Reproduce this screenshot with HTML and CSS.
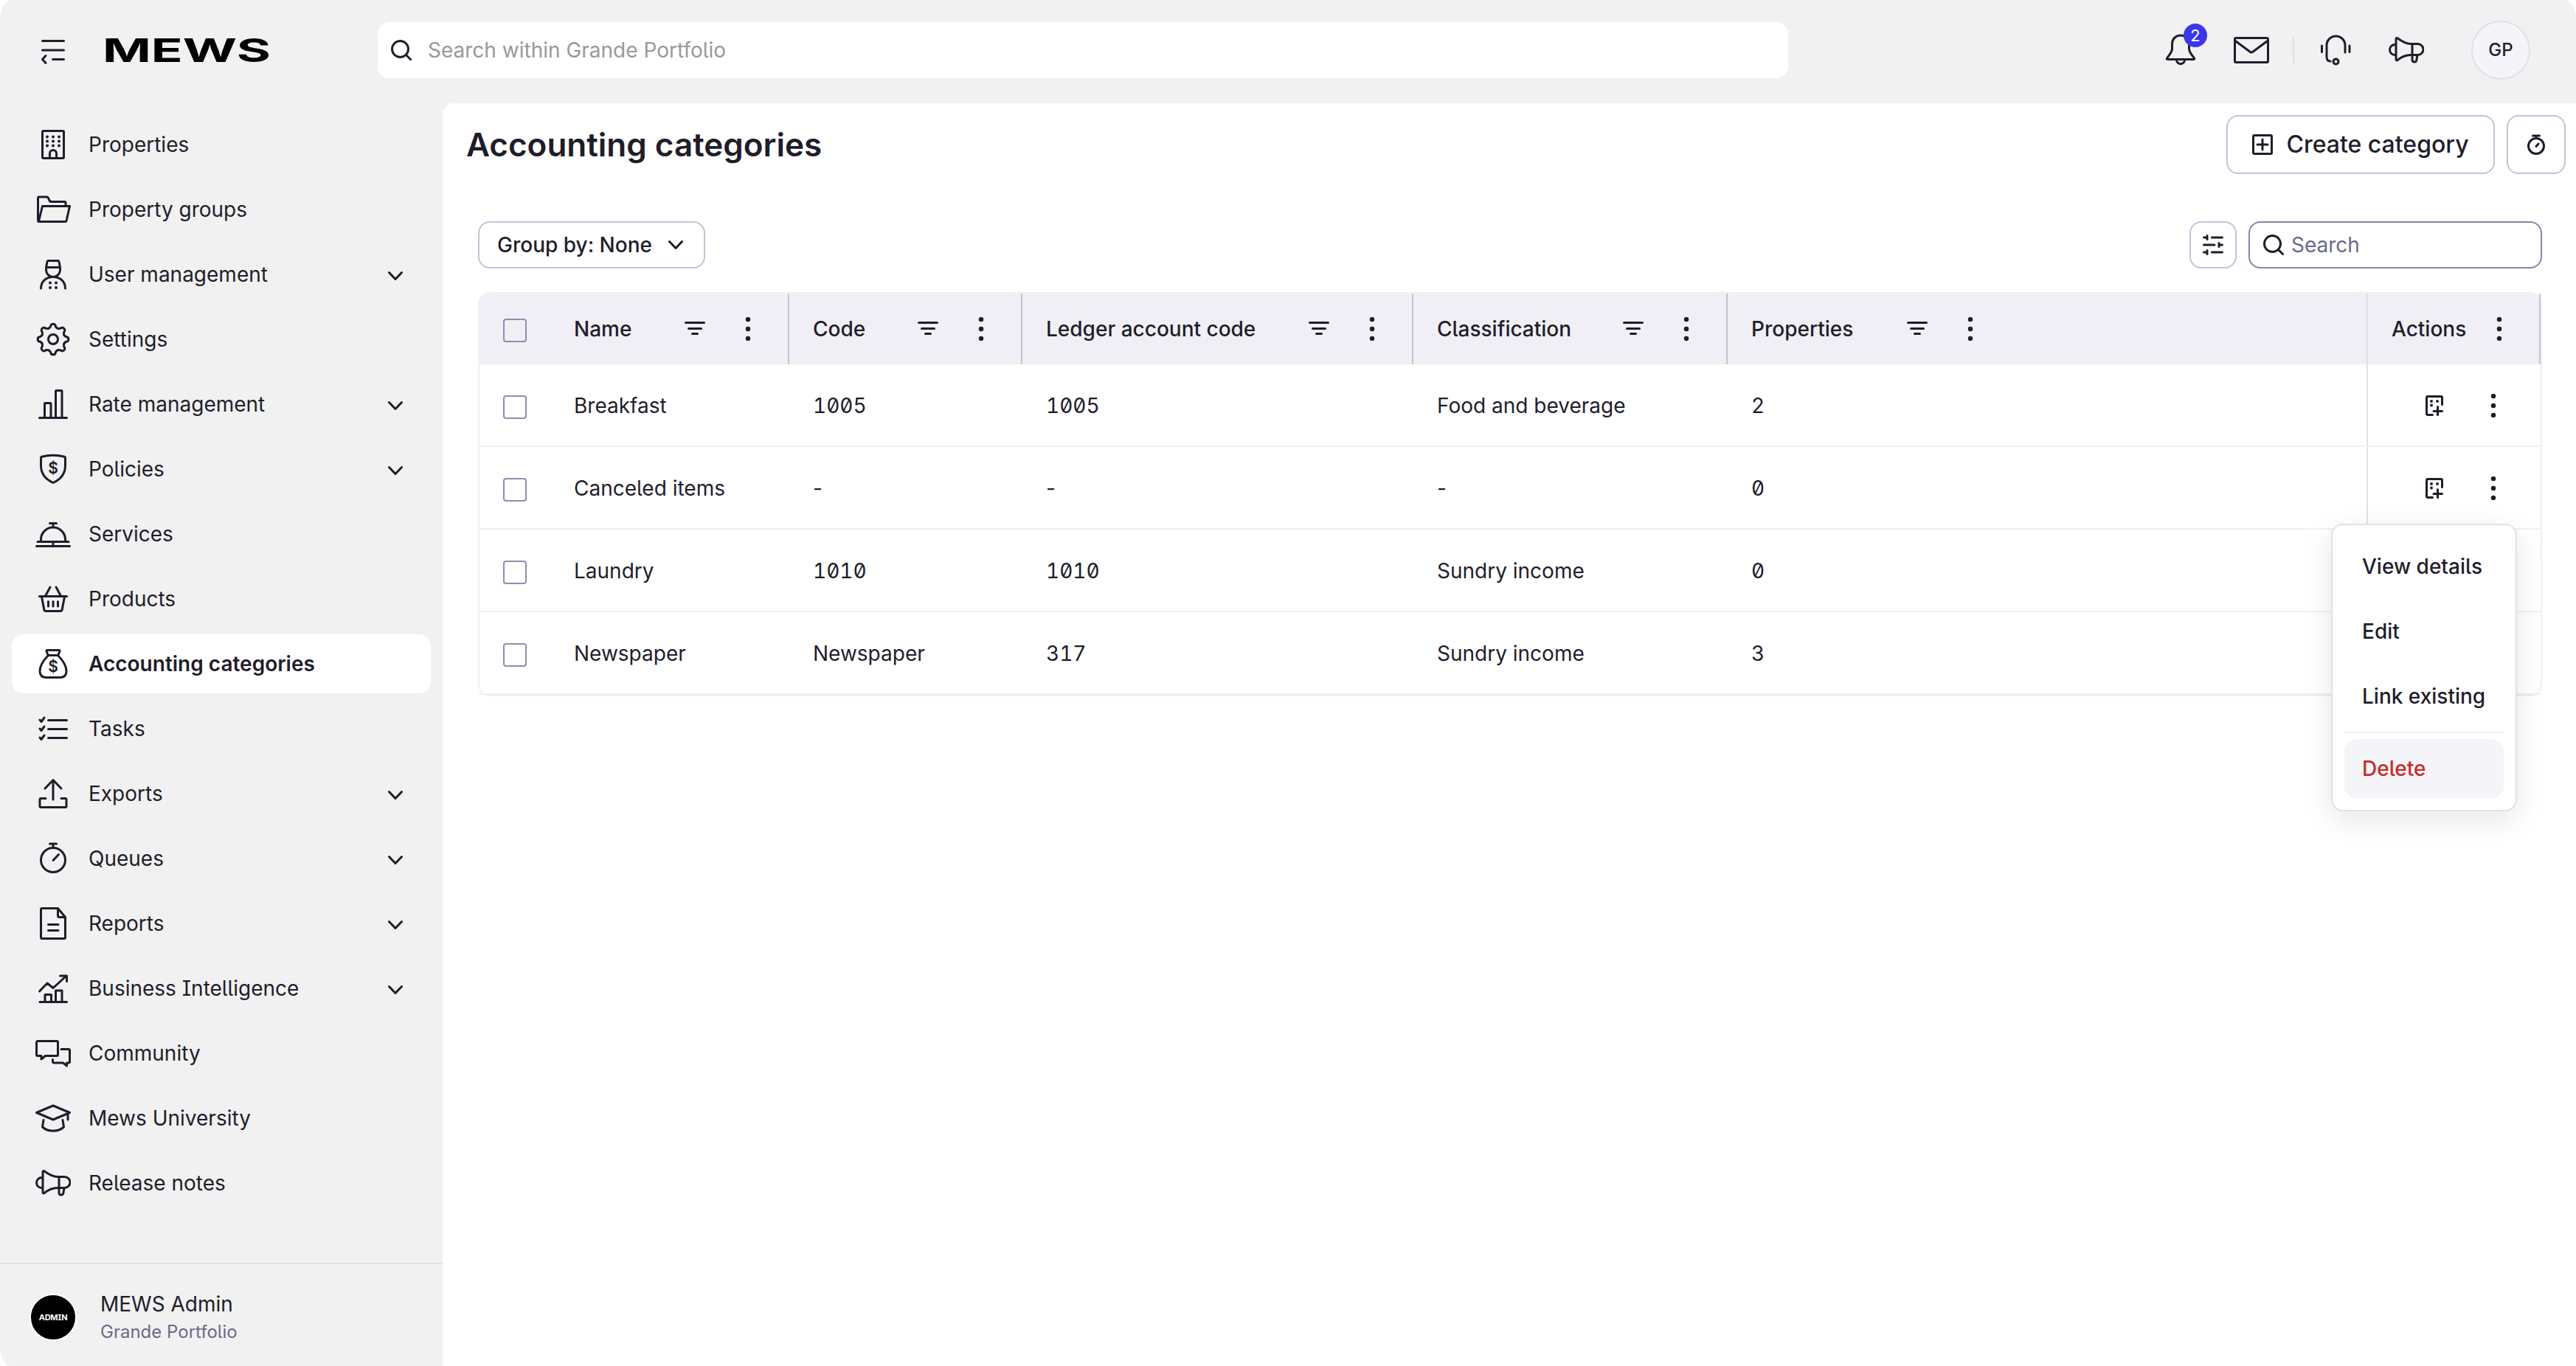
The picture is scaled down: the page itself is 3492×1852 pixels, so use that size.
FILE: index.html
```html
<!DOCTYPE html>
<html lang="en">
<head>
    <meta charset="UTF-8">
    <meta name="viewport" content="width=device-width, initial-scale=1.0">
    <title>Accounting categories</title>
    <link rel="stylesheet" href="styles.css">
</head>
<body>
    <!-- icon sprite -->
    <svg class="sprite" aria-hidden="true">
        <symbol id="i-menu" viewBox="0 0 48 48"><path d="M9.500 11.500h29M9.500 24h29M23.500 36.500h15M14 31.500l-4.500 5 4.500 5"/></symbol>
        <symbol id="i-building" viewBox="0 0 48 48">
            <rect x="9.500" y="5.500" width="29" height="37" rx="1.500"/>
            <path d="M19.500 42v-6a4.500 4.500 0 0 1 9 0v6"/>
            <path class="dots" d="M16 13.500h0M24 13.500h0M32 13.500h0M16 19.500h0M24 19.500h0M32 19.500h0M16 25.500h0M24 25.500h0M32 25.500h0"/>
        </symbol>
        <symbol id="i-folder" viewBox="0 0 48 48"><path d="M41 19v-4a1.500 1.500 0 0 0-1.500-1.500H22c-2 0-2.500-.5-3.200-2l-1.300-3c-.5-1-1-1.500-2-1.500H5a1.500 1.500 0 0 0-1.500 1.500v30.500a1.500 1.500 0 0 0 1.500 1.500h35.500a1.500 1.500 0 0 0 1.500-1l4.500-20H9.500L4.500 40"/></symbol>
        <symbol id="i-user" viewBox="0 0 48 48">
            <path d="M17.500 5.500h13a1.500 1.500 0 0 1 1.500 1.300L33.500 15v3c0 5-4 9.500-9.500 9.500s-9.500-4.500-9.500-9.500v-3L16 6.800a1.500 1.500 0 0 1 1.500-1.300zM15 14.500h18M7.500 43c0-9 6.500-15.500 16.500-15.500S40.500 34 40.500 43"/>
            <path class="dots" d="M20 35.500h0M28 35.500h0M20 42h0M28 42h0"/>
        </symbol>
        <symbol id="i-gear" viewBox="0 0 48 48">
            <path id="tooth" d="M17.900 9.200C20.500 8.100 20.700 6.600 21 5Q21.500 3.200 24 3.200T27 5C27.300 6.600 27.500 8.100 30.100 9.200"/>
            <use href="#tooth" transform="rotate(45 24 24)"/><use href="#tooth" transform="rotate(90 24 24)"/>
            <use href="#tooth" transform="rotate(135 24 24)"/><use href="#tooth" transform="rotate(180 24 24)"/>
            <use href="#tooth" transform="rotate(225 24 24)"/><use href="#tooth" transform="rotate(270 24 24)"/>
            <use href="#tooth" transform="rotate(315 24 24)"/>
            <circle cx="24" cy="24" r="6.500"/>
        </symbol>
        <symbol id="i-bars" viewBox="0 0 48 48"><path d="M5.500 42.500h37M12.500 42V23.500a1 1 0 0 1 1-1h6.500a1 1 0 0 1 1 1V42M27.500 42V6.500a1 1 0 0 1 1-1H35a1 1 0 0 1 1 1V42"/></symbol>
        <symbol id="i-shield" viewBox="0 0 48 48"><path d="M7.500 8.500a1.500 1.500 0 0 1 1-1.300Q24 3.500 39.500 7.200a1.500 1.500 0 0 1 1 1.300V19C40.500 30 34 38 24 42.500 14 38 7.500 30 7.500 19z"/><text x="24" y="29.500">$</text></symbol>
        <symbol id="i-service" viewBox="0 0 48 48"><path d="M19.500 9.500h9M24 9.500V15M7.500 34v-2.500a16.500 16.500 0 0 1 33 0V34M3 34.500h42M24 34.500v6M1.500 40.500h45"/></symbol>
        <symbol id="i-basket" viewBox="0 0 48 48"><path d="M20 8l-6.500 12M28 8l6.500 12M5.500 20.500h37M8.500 21l3.300 17.500a2.500 2.500 0 0 0 2.500 2h19.400a2.500 2.500 0 0 0 2.500-2L39.500 21M17.500 27.500v6.500M24 27.500v6.500M30.500 27.500v6.500"/></symbol>
        <symbol id="i-money" viewBox="0 0 48 48"><path d="M16 5.500h16a1 1 0 0 1 1 1.300l-2.200 5.700H17.200L15 6.800a1 1 0 0 1 1-1.300zM17.500 12.500C12 18 6 25.500 6 34c0 6 3.500 8.500 9 8.500h18c5.500 0 9-2.500 9-8.500 0-8.500-6-16-11.500-21.500"/><text x="24" y="34.500">$</text></symbol>
        <symbol id="i-tasks" viewBox="0 0 48 48"><path d="M17.500 12.500h25M17.500 24.500h25M17.500 36.500h25M6 12l2 2.500 4-5.500M6 24l2 2.500 4-5.500M6 36l2 2.500 4-5.500"/></symbol>
        <symbol id="i-export" viewBox="0 0 48 48"><path d="M24 32V5.500M13 17L24 5.500 35 17M14 30.500H7.500A1.500 1.500 0 0 0 6 32v9a1.500 1.500 0 0 0 1.500 1.500h33A1.500 1.500 0 0 0 42 41v-9a1.500 1.500 0 0 0-1.500-1.500H35"/></symbol>
        <symbol id="i-timer" viewBox="0 0 48 48"><path d="M19.500 4h9M24 4v5.500M24 26.500l7.500-8"/><circle cx="24" cy="26" r="16.500"/></symbol>
        <symbol id="i-report" viewBox="0 0 48 48"><path d="M30.500 3.500H9A1.500 1.500 0 0 0 7.500 5v38A1.500 1.500 0 0 0 9 44.500h30a1.500 1.500 0 0 0 1.500-1.500V15.500zM30.500 3.500v10.500a1.500 1.500 0 0 0 1.500 1.500h8.500M17.500 25.500h13.500M17.500 33.500h13.500"/></symbol>
        <symbol id="i-trend" viewBox="0 0 48 48"><path d="M5.500 28L16 17l8 6.500L42 7M33.500 7H42.500v7.500M6 42.500h36.500M13 42v-9.500h8.500V42M27.500 42V27H36v15"/></symbol>
        <symbol id="i-chat" viewBox="0 0 48 48"><path d="M3 7.500h26a1.500 1.500 0 0 1 1.500 1.500v17a1.500 1.500 0 0 1-1.500 1.500H13.500l-5.500 4.500v-4.500H3A1.500 1.500 0 0 1 1.500 26V9A1.500 1.500 0 0 1 3 7.500zM35 18.500h10a1.500 1.500 0 0 1 1.500 1.500v15.500a1.500 1.500 0 0 1-1.500 1.500h-2.500v4l-5-4H25.500a2 2 0 0 1-2-2v-2.500"/></symbol>
        <symbol id="i-cap" viewBox="0 0 48 48"><path d="M24 7L46.500 16.500 24 26 1.500 16.500zM44 17.500V26M11 26.500L9.500 36c8 7 21 7 29 0L37 26.500"/></symbol>
        <symbol id="i-horn" viewBox="0 0 48 48"><path d="M10 9c0-1.500 1-2 2-1.200C17 11.500 23 15.500 30 15.500h9.500a7 7 0 0 1 0 15H30c-7 0-13 3-18 7-1 .8-2 .3-2-1.200zM10 16.500H8.500a7 7 0 0 0 0 14H10M32 15.500v22a3 3 0 0 0 5.800.5L39 30.500"/></symbol>
        <symbol id="i-bell" viewBox="0 0 48 48"><path d="M24 4c-7 0-11.500 5-11.500 12v6c0 5-4.500 9-7 13-.6 1 0 1.500 1 1.500h35c1 0 1.600-.5 1-1.500-2.500-4-7-8-7-13v-6C35.500 9 31 4 24 4zM18.500 37c0 7.500 11 7.500 11 0"/></symbol>
        <symbol id="i-mail" viewBox="0 0 48 48"><rect x="1.500" y="7.500" width="45" height="33" rx="1.500"/><path d="M3 12l19.500 14.500q1.500 1 3 0L45 12"/></symbol>
        <symbol id="i-headset" viewBox="0 0 48 48"><path d="M17 39c-3 0-5-2-5-6V17.500a12.500 12.500 0 0 1 25 0V27M5.500 18v8.500M43 18v8.500"/><circle cx="24.500" cy="39.500" r="3.500"/></symbol>
        <symbol id="i-search" viewBox="0 0 28 28"><circle cx="12.500" cy="12.500" r="11"/><path d="M20.500 20.500l6 6"/></symbol>
        <symbol id="i-down" viewBox="0 0 20 20"><path d="M1.500 5.500L10 14.500l8.500-9"/></symbol>
        <symbol id="i-add" viewBox="0 0 28 28"><rect x="1.500" y="1.500" width="25" height="25" rx="1.500"/><path d="M14 7v14M7 14h14"/></symbol>
        <symbol id="i-clock" viewBox="0 0 28 28"><path d="M9.500 2h9M14 2v3M14 16.500l3-3.500"/><circle cx="14" cy="16" r="10.500"/></symbol>
        <symbol id="i-sliders" viewBox="0 0 28 28"><path d="M1.500 4H6M12.500 4h14M1.500 14H16M22 14h4.500M1.500 24H6M12.500 24h14M6 1.500v5M22 11.500v5M6 21.500v5"/></symbol>
        <symbol id="i-filter" viewBox="0 0 28 28"><path d="M1.500 5.500h25M5.500 13.500h17M10.500 20.500h7"/></symbol>
        <symbol id="i-more" viewBox="0 0 8 32"><path class="big-dots" d="M4 3h0M4 16h0M4 29h0"/></symbol>
        <symbol id="i-link" viewBox="0 0 28 28"><path d="M11.500 26.500H5a1.500 1.500 0 0 1-1.500-1.500V3A1.500 1.500 0 0 1 5 1.500h18a1.500 1.500 0 0 1 1.500 1.500v9.500M18.500 15.500v11M13 21.500h11.500"/><path class="dots" d="M10 8h0M18 8h0M10 13.500h0"/></symbol>
    </svg>

    <div class="app">
        <header class="topbar">
            <svg class="icon"><use href="#i-menu"/></svg>
            <svg class="logo" viewBox="0 0 220 32"><text x="-5" y="32" textLength="228" lengthAdjust="spacingAndGlyphs">MEWS</text></svg>
            <div class="global-search">
                <svg class="icon-sm"><use href="#i-search"/></svg>
                <span>Search within Grande Portfolio</span>
            </div>
            <div class="tools">
                <div class="bell"><svg class="icon"><use href="#i-bell"/></svg><span class="badge">2</span></div>
                <svg class="icon"><use href="#i-mail"/></svg>
                <span class="tools-line"></span>
                <svg class="icon"><use href="#i-headset"/></svg>
                <svg class="icon"><use href="#i-horn"/></svg>
                <div class="profile">GP</div>
            </div>
        </header>

        <aside class="sidebar">
            <nav class="nav">
                <a class="nav-item"><svg class="icon"><use href="#i-building"/></svg><span>Properties</span></a>
                <a class="nav-item"><svg class="icon"><use href="#i-folder"/></svg><span>Property groups</span></a>
                <a class="nav-item"><svg class="icon"><use href="#i-user"/></svg><span>User management</span><svg class="chevron"><use href="#i-down"/></svg></a>
                <a class="nav-item"><svg class="icon"><use href="#i-gear"/></svg><span>Settings</span></a>
                <a class="nav-item"><svg class="icon"><use href="#i-bars"/></svg><span>Rate management</span><svg class="chevron"><use href="#i-down"/></svg></a>
                <a class="nav-item"><svg class="icon"><use href="#i-shield"/></svg><span>Policies</span><svg class="chevron"><use href="#i-down"/></svg></a>
                <a class="nav-item"><svg class="icon"><use href="#i-service"/></svg><span>Services</span></a>
                <a class="nav-item"><svg class="icon"><use href="#i-basket"/></svg><span>Products</span></a>
                <a class="nav-item active"><svg class="icon"><use href="#i-money"/></svg><span>Accounting categories</span></a>
                <a class="nav-item"><svg class="icon"><use href="#i-tasks"/></svg><span>Tasks</span></a>
                <a class="nav-item"><svg class="icon"><use href="#i-export"/></svg><span>Exports</span><svg class="chevron"><use href="#i-down"/></svg></a>
                <a class="nav-item"><svg class="icon"><use href="#i-timer"/></svg><span>Queues</span><svg class="chevron"><use href="#i-down"/></svg></a>
                <a class="nav-item"><svg class="icon"><use href="#i-report"/></svg><span>Reports</span><svg class="chevron"><use href="#i-down"/></svg></a>
                <a class="nav-item"><svg class="icon"><use href="#i-trend"/></svg><span>Business Intelligence</span><svg class="chevron"><use href="#i-down"/></svg></a>
                <a class="nav-item"><svg class="icon"><use href="#i-chat"/></svg><span>Community</span></a>
                <a class="nav-item"><svg class="icon"><use href="#i-cap"/></svg><span>Mews University</span></a>
                <a class="nav-item"><svg class="icon"><use href="#i-horn"/></svg><span>Release notes</span></a>
            </nav>
            <div class="account">
                <div class="account-avatar">ADMIN</div>
                <div>
                    <div class="account-name">MEWS Admin</div>
                    <div class="account-sub">Grande Portfolio</div>
                </div>
            </div>
        </aside>

        <main class="main">
            <div class="page-head">
                <h1>Accounting categories</h1>
                <button class="btn btn-create"><svg class="icon-sm"><use href="#i-add"/></svg>Create category</button>
                <button class="btn btn-clock"><svg class="icon-sm"><use href="#i-clock"/></svg></button>
            </div>

            <div class="toolbar">
                <button class="btn btn-group">Group by: None<svg class="chevron"><use href="#i-down"/></svg></button>
                <button class="btn btn-columns"><svg class="icon-sm"><use href="#i-sliders"/></svg></button>
                <div class="table-search"><svg class="icon-sm"><use href="#i-search"/></svg><span>Search</span></div>
            </div>

            <div class="table">
                <div class="row head">
                    <div class="cell first"><span class="check"></span><span class="label">Name</span><svg class="icon-sm"><use href="#i-filter"/></svg><svg class="more"><use href="#i-more"/></svg></div>
                    <div class="cell"><span class="label">Code</span><svg class="icon-sm"><use href="#i-filter"/></svg><svg class="more"><use href="#i-more"/></svg></div>
                    <div class="cell"><span class="label">Ledger account code</span><svg class="icon-sm"><use href="#i-filter"/></svg><svg class="more"><use href="#i-more"/></svg></div>
                    <div class="cell"><span class="label">Classification</span><svg class="icon-sm"><use href="#i-filter"/></svg><svg class="more"><use href="#i-more"/></svg></div>
                    <div class="cell wide"><span class="label">Properties</span><svg class="icon-sm"><use href="#i-filter"/></svg><svg class="more"><use href="#i-more"/></svg></div>
                    <div class="cell actions"><span class="label">Actions</span><svg class="more"><use href="#i-more"/></svg></div>
                </div>
                <div class="row">
                    <div class="cell first"><span class="check"></span>Breakfast</div>
                    <div class="cell num">1005</div>
                    <div class="cell num">1005</div>
                    <div class="cell">Food and beverage</div>
                    <div class="cell num">2</div>
                    <div class="cell actions"><svg class="icon-sm"><use href="#i-link"/></svg><svg class="more"><use href="#i-more"/></svg></div>
                </div>
                <div class="row">
                    <div class="cell first"><span class="check"></span>Canceled items</div>
                    <div class="cell">-</div>
                    <div class="cell">-</div>
                    <div class="cell">-</div>
                    <div class="cell num">0</div>
                    <div class="cell actions">
                        <svg class="icon-sm"><use href="#i-link"/></svg><svg class="more"><use href="#i-more"/></svg>
                        <div class="menu">
                            <a>View details</a>
                            <a>Edit</a>
                            <a>Link existing</a>
                            <hr>
                            <a class="danger">Delete</a>
                        </div>
                    </div>
                </div>
                <div class="row">
                    <div class="cell first"><span class="check"></span>Laundry</div>
                    <div class="cell num">1010</div>
                    <div class="cell num">1010</div>
                    <div class="cell">Sundry income</div>
                    <div class="cell num">0</div>
                    <div class="cell actions"></div>
                </div>
                <div class="row">
                    <div class="cell first"><span class="check"></span>Newspaper</div>
                    <div class="cell">Newspaper</div>
                    <div class="cell num">317</div>
                    <div class="cell">Sundry income</div>
                    <div class="cell num">3</div>
                    <div class="cell actions"></div>
                </div>
            </div>
        </main>
    </div>
</body>
</html>
```
FILE: styles.css
```css
* { box-sizing: border-box; }
body { margin: 0; background: #fff; font-family: Inter, "Liberation Sans", sans-serif; font-size: 28px; line-height: 40px; color: #1f1d2b; font-feature-settings: "zero", "cv05", "cv08"; }
.sprite { display: none; }
svg { flex: none; fill: none; stroke: currentColor; stroke-width: 3; stroke-linecap: round; stroke-linejoin: round; }
svg text { fill: currentColor; stroke: none; font-size: 21px; font-weight: 600; text-anchor: middle; }
.dots { stroke-width: 4; }
.big-dots { stroke-width: 6.5; }
.icon { width: 48px; height: 48px; }
.icon-sm { width: 28px; height: 28px; }
.chevron { width: 20px; height: 20px; }
.more { width: 8px; height: 32px; }

.app { display: grid; grid-template: 140px 1fr / 600px 1fr; height: 1852px; background: #f1f1f1; border-radius: 16px 16px 0 14px / 26px 22px 0 28px; overflow: hidden; }

/* top bar */
.topbar { grid-column: 1 / 3; display: flex; align-items: center; height: 136px; padding: 0 62px 0 48px; }
.logo { width: 220px; height: 32px; margin-left: 48px; overflow: visible; }
.logo text { fill: #000; font-size: 44px; font-weight: 700; text-anchor: start; }
.global-search { display: flex; align-items: center; gap: 22px; width: 1912px; height: 76px; margin-left: 148px; padding-left: 18px; background: #fff; border-radius: 16px; color: #999; }
.global-search svg { color: #1f1d2b; }
.tools { display: flex; align-items: center; margin-left: auto; }
.tools > svg { margin-left: 48px; }
.bell { position: relative; height: 48px; }
.badge { position: absolute; left: 28px; top: -12px; width: 32px; height: 32px; border-radius: 50%; background: #3a36ea; color: #fff; font-size: 22px; line-height: 32px; text-align: center; }
.tools-line { width: 2px; height: 36px; margin: 0 -16px 0 32px; background: #dedde9; }
.profile { width: 80px; height: 80px; margin-left: 64px; border: 2px solid #e0dfeb; border-radius: 50%; background: #f5f4f8; font-size: 24px; font-weight: 500; line-height: 76px; text-align: center; }

/* sidebar */
.sidebar { display: flex; flex-direction: column; }
.nav { display: flex; flex-direction: column; gap: 8px; padding: 16px; }
.nav-item { display: flex; align-items: center; gap: 24px; height: 80px; padding: 0 38px 0 32px; border-radius: 16px; }
.nav-item .chevron { margin: 4px 0 0 auto; }
.active { background: #fff; font-weight: 600; }
.account { display: flex; align-items: center; gap: 32px; height: 140px; margin-top: auto; padding: 6px 40px 0; border-top: 2px solid #e0dfeb; }
.account-avatar { width: 64px; height: 64px; border: 2px solid #fff; border-radius: 50%; background: #000; color: #fff; font-size: 11px; font-weight: 700; line-height: 60px; text-align: center; letter-spacing: -0.3px; }
.account-name { line-height: 40px; }
.account-sub { color: #6a698a; font-size: 24px; line-height: 36px; }

/* content */
.main { background: #fff; border-top-left-radius: 16px; padding: 16px 14px 0 48px; }
.page-head { display: flex; align-items: center; gap: 16px; height: 80px; margin-left: -16px; }
h1 { margin: 0 auto 0 0; font-size: 44px; font-weight: 600; line-height: 56px; }
.btn { display: flex; align-items: center; justify-content: center; padding: 0; border: 2px solid #c4c2d8; border-radius: 16px; background: #fff; color: inherit; font: inherit; font-weight: 500; font-feature-settings: inherit; }
.btn-create { gap: 18px; width: 364px; height: 80px; font-size: 32px; }
.btn-clock { width: 80px; height: 80px; }
.toolbar { display: flex; align-items: center; gap: 16px; margin: 64px 32px 32px 0; }
.btn-group { justify-content: flex-start; gap: 22px; width: 308px; height: 64px; padding-left: 24px; }
.btn-columns { width: 64px; height: 64px; margin-left: auto; }
.table-search { display: flex; align-items: center; gap: 10px; width: 398px; height: 64px; padding-left: 18px; border: 2px solid #8685a8; border-radius: 16px; color: #6a698a; }
.table-search svg { color: #1f1d2b; }

/* table */
.table { margin-right: 32px; border: 2px solid #f0eff5; border-radius: 16px; }
.row { display: grid; grid-template-columns: 420px 316px 530px 426px 1fr 236px; height: 112px; border-bottom: 2px solid #f0eff5; }
.cell { display: flex; align-items: center; padding: 2px 0 0 32px; }
.num { font-feature-settings: "tnum", "zero"; }
.first { gap: 64px; }
.check { width: 32px; height: 32px; margin-top: 4px; border: 2px solid #8e8db0; border-radius: 4px; }
.actions { position: relative; border-left: 2px solid #e0dfeb; padding-left: 76px; }
.actions .more { margin-left: 62px; }
.head { height: 96px; border: 0; border-radius: 14px 14px 0 0; background: #f0eff5; font-weight: 500; }
.head .cell { border-right: 2px solid #c4c2d8; padding: 0 50px 0 32px; }
.head .label { margin-right: auto; }
.head .more { margin-left: 54px; }
.head .first { gap: 0; }
.head .first .check { margin-right: 64px; }
.head .wide { width: 383px; border: 0; }
.head .actions .more { margin-left: 0; }

/* row menu */
.menu { position: absolute; right: 32px; top: 104px; z-index: 1; display: flex; flex-direction: column; gap: 8px; width: 252px; height: 390px; padding: 16px; border: 2px solid #e0dfeb; border-radius: 16px; background: #fff; box-shadow: 0 12px 40px rgba(0, 0, 0, 0.1); font-weight: 500; }
.menu a { height: 80px; padding-left: 24px; border-radius: 16px; line-height: 80px; white-space: nowrap; }
.menu hr { width: 100%; height: 2px; margin: 0; border: 0; background: #f0eff5; }
.menu .danger { background: #f5f4f8; color: #c42d23; }
```
